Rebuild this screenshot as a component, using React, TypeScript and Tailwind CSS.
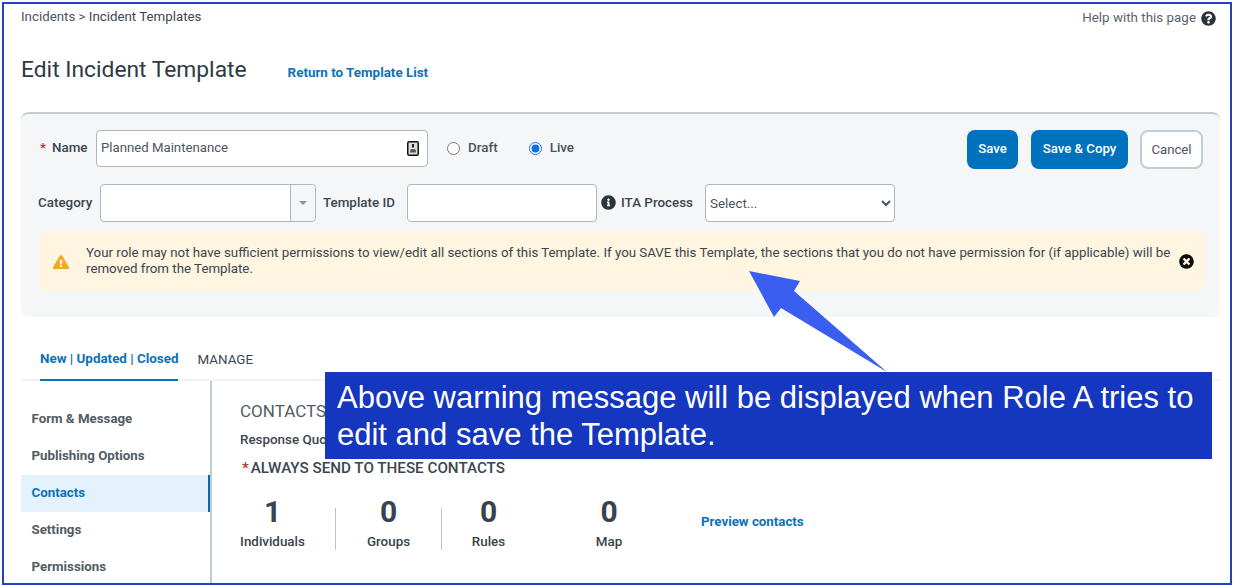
import React from "react";
import { FaQuestionCircle, FaInfoCircle, FaTimesCircle, FaExclamationTriangle } from "react-icons/fa";

function NameIcon() {
  return (
    <svg width="12" height="15" viewBox="0 0 12 15" className="block">
      <rect x="0.75" y="0.75" width="10.5" height="13.5" rx="1.5" fill="#d9dcdc" stroke="#111" strokeWidth="1.5" />
      <rect x="5" y="3" width="2" height="3.5" fill="#222" />
      <path d="M3.2 11.5 L3.2 8.8 Q6 7.4 8.8 8.8 L8.8 11.5 Z" fill="#555" />
    </svg>
  );
}

function Stat({ value, label, className }: { value: string; label: string; className: string }) {
  return (
    <div className={`flex flex-col items-center ${className}`}>
      <div className="text-[30px] leading-[36px] font-bold text-[#37434d]">{value}</div>
      <div className="mt-[4px] text-[13.4px] leading-[16px] font-medium text-[#37434d]">{label}</div>
    </div>
  );
}

const navItems = ["Form & Message", "Publishing Options", "Contacts", "Settings", "Permissions"];

export default function App() {
  return (
    <div className="relative w-[1233px] h-[585px] overflow-hidden bg-white font-['Roboto',sans-serif] text-[#3b4650]">
      <div className="ml-[2px] mr-[1px] mt-[2px] h-[583px] border-2 border-[#2442bd] pl-[17px] pr-[9px] overflow-hidden">
        <div className="h-[108px]">
          <div className="flex justify-between pr-[5px]">
            <div className="pt-[5px] text-[13.3px] leading-[16px] text-[#4a555e]">
              Incidents &gt; <span className="text-[#3b4650]">Incident Templates</span>
            </div>
            <div className="pt-[6px] flex items-center gap-[5px] text-[13.4px] leading-[16px] text-[#5a646c]">
              Help with this page
              <FaQuestionCircle className="text-[#2b343b] text-[15px]" />
            </div>
          </div>
          <div className="mt-[28px] flex items-center">
            <h1 className="whitespace-nowrap text-[22.8px] leading-[32px] font-normal text-[#2f3a43]">Edit Incident Template</h1>
            <a className="ml-[41px] mt-[6px] text-[13.4px] font-bold text-[#0a72ba]">Return to Template List</a>
          </div>
        </div>

        <div className="h-[205px] w-[1199px] rounded-[8px] border-t-2 border-[#c3ccd2] bg-[#f4f6f8] pl-[17px] pr-[15px] pt-[16px]">
          <div className="flex h-[39px] items-start">
            <div className="ml-[2px] flex h-[37px] w-[47px] items-center whitespace-nowrap text-[13.4px] font-medium text-[#3b4650]">
              <span className="text-[#b5342c] mr-[6px]">*</span>Name
            </div>
            <div className="ml-[9px] flex h-[37px] w-[332px] items-center justify-between rounded-[4px] border border-[#a9b7bf] bg-white pl-[4px] pr-[8px] text-[13.2px] text-[#4a555e]">
              <span className="pb-[2px]">Planned Maintenance</span>
              <NameIcon />
            </div>
            <label className="ml-[19px] flex h-[37px] items-center text-[13.4px] font-medium text-[#4a555e]">
              <input type="radio" readOnly checked={false} className="m-0 h-[13px] w-[13px]" />
              <span className="ml-[8px]">Draft</span>
            </label>
            <label className="ml-[31px] flex h-[37px] items-center text-[13.4px] font-medium text-[#4a555e]">
              <input type="radio" readOnly checked className="m-0 h-[13px] w-[13px] accent-[#0b6fe8]" />
              <span className="ml-[8px]">Live</span>
            </label>
            <div className="ml-auto mr-[2px] flex">
              <button className="h-[39px] w-[51px] rounded-[8px] bg-[#0071bc] pb-[2px] text-[13.2px] font-medium text-white">Save</button>
              <button className="ml-[13px] h-[39px] w-[97px] rounded-[8px] bg-[#0071bc] pb-[2px] text-[13.2px] font-medium text-white">Save &amp; Copy</button>
              <button className="ml-[12px] h-[39px] w-[63px] rounded-[8px] border-2 border-[#c3ccd2] bg-white text-[13.2px] text-[#4a555e]">Cancel</button>
            </div>
          </div>

          <div className="mt-[15px] flex h-[38px] items-center whitespace-nowrap text-[13.4px] font-medium">
            <span className="w-[54px]">Category</span>
            <div className="ml-[8px] flex h-[38px] w-[216px] rounded-[4px] border border-[#a9b7bf] bg-white">
              <div className="flex-1" />
              <div className="flex w-[25px] items-center justify-center border-l border-[#a9b7bf] bg-[#f4f6f8] rounded-r-[4px]">
                <div className="h-0 w-0 border-x-[4px] border-t-[4px] border-x-transparent border-t-[#8a949b]" />
              </div>
            </div>
            <span className="ml-[7px] w-[72px]">Template ID</span>
            <div className="ml-[12px] h-[38px] w-[190px] rounded-[4px] border border-[#a9b7bf] bg-white" />
            <FaInfoCircle className="ml-[4px] mb-[2px] text-[15px] text-[#2b343b]" />
            <span className="ml-[5px] w-[71px]">ITA Process</span>
            <select className="ml-[13px] h-[38px] w-[190px] rounded-[4px] border border-[#a9b7bf] bg-white text-[13.4px] font-normal text-[#4a555e]">
              <option>Select...</option>
            </select>
          </div>

          <div className="mt-[10px] flex h-[59px] w-[1167px] items-center rounded-[8px] bg-[#fff5e0] pl-[15px] pr-[11px] text-[13.3px] leading-[16px] text-[#3b4650]">
            <FaExclamationTriangle className="shrink-0 text-[16px] text-[#f5a623]" />
            <p className="ml-[17px] flex-1 pb-[2px]">
              Your role may not have sufficient permissions to view/edit all sections of this Template. If you SAVE this Template, the sections that you do not have permission for (if applicable) will be removed from the Template.
            </p>
            <FaTimesCircle className="ml-[7px] shrink-0 text-[15px] text-[#0b0b0b]" />
          </div>
        </div>

        <div className="flex h-[64px] w-[1199px] items-end border-b-2 border-[#f0f2f4] pl-[19px]">
          <div className="-mb-[2px] flex h-[44px] items-center border-b-2 border-[#0a72ba] pt-[2px] text-[13.4px] font-bold text-[#0a72ba]">
            New | Updated | Closed
          </div>
          <div className="ml-[19px] -mb-[2px] flex h-[44px] items-center pt-[2px] text-[13.4px] text-[#3b4650]">MANAGE</div>
        </div>

        <div className="flex">
          <nav className="h-[210px] w-[191px] shrink-0 border-r-2 border-[#c3ccd2] pt-[20px]">
            {navItems.map((item) =>
              item === "Contacts" ? (
                <div key={item} className="flex h-[37px] items-center border-r-2 border-[#0a6aa8] bg-[#e3f2fd] pb-[2px] pl-[10.5px] text-[13.3px] font-bold text-[#0a72ba]">
                  {item}
                </div>
              ) : (
                <div key={item} className="flex h-[37px] items-center pb-[2px] pl-[10.5px] text-[13.3px] font-bold text-[#515c64]">
                  {item}
                </div>
              )
            )}
          </nav>
          <section className="pl-[28px] pt-[20px]">
            <div className="text-[17px] leading-[20px] text-[#515c64]">CONTACTS</div>
            <div className="mt-[11px] text-[13.4px] leading-[16px] font-medium text-[#3b4650]">Response Quota</div>
            <div className="mt-[11px] text-[15.2px] leading-[18px] font-medium text-[#3b4650]">
              <span className="text-[#b5342c] ml-[2px] mr-[2px]">*</span>ALWAYS SEND TO THESE CONTACTS
            </div>
            <div className="mt-[17px] flex items-start">
              <Stat value="1" label="Individuals" className="w-[65px]" />
              <div className="ml-[30px] mt-[14px] h-[42px] w-px bg-[#b8c4ca]" />
              <Stat value="0" label="Groups" className="w-[105px]" />
              <div className="mt-[14px] h-[42px] w-px bg-[#b8c4ca]" />
              <Stat value="0" label="Rules" className="w-[93px]" />
              <Stat value="0" label="Map" className="w-[148px]" />
              <a className="ml-[18px] mt-[20px] text-[13.3px] leading-[16px] font-bold text-[#0a72ba]">Preview contacts</a>
            </div>
          </section>
        </div>
      </div>

      <svg className="absolute left-[740px] top-[265px]" width="155" height="110" viewBox="740 265 155 110">
        <polygon points="749,271 800,281 794,291 887,372 781,308 774,317" fill="#3a5ef0" />
      </svg>
      <div className="absolute left-[325px] top-[372px] h-[87px] w-[887px] bg-[#1536be] pl-[12px] pr-[10px] pt-[7px] font-['Liberation_Sans',sans-serif] text-[31px] leading-[37px] text-white">
        Above warning message will be displayed when Role A tries to edit and save the Template.
      </div>
    </div>
  );
}
